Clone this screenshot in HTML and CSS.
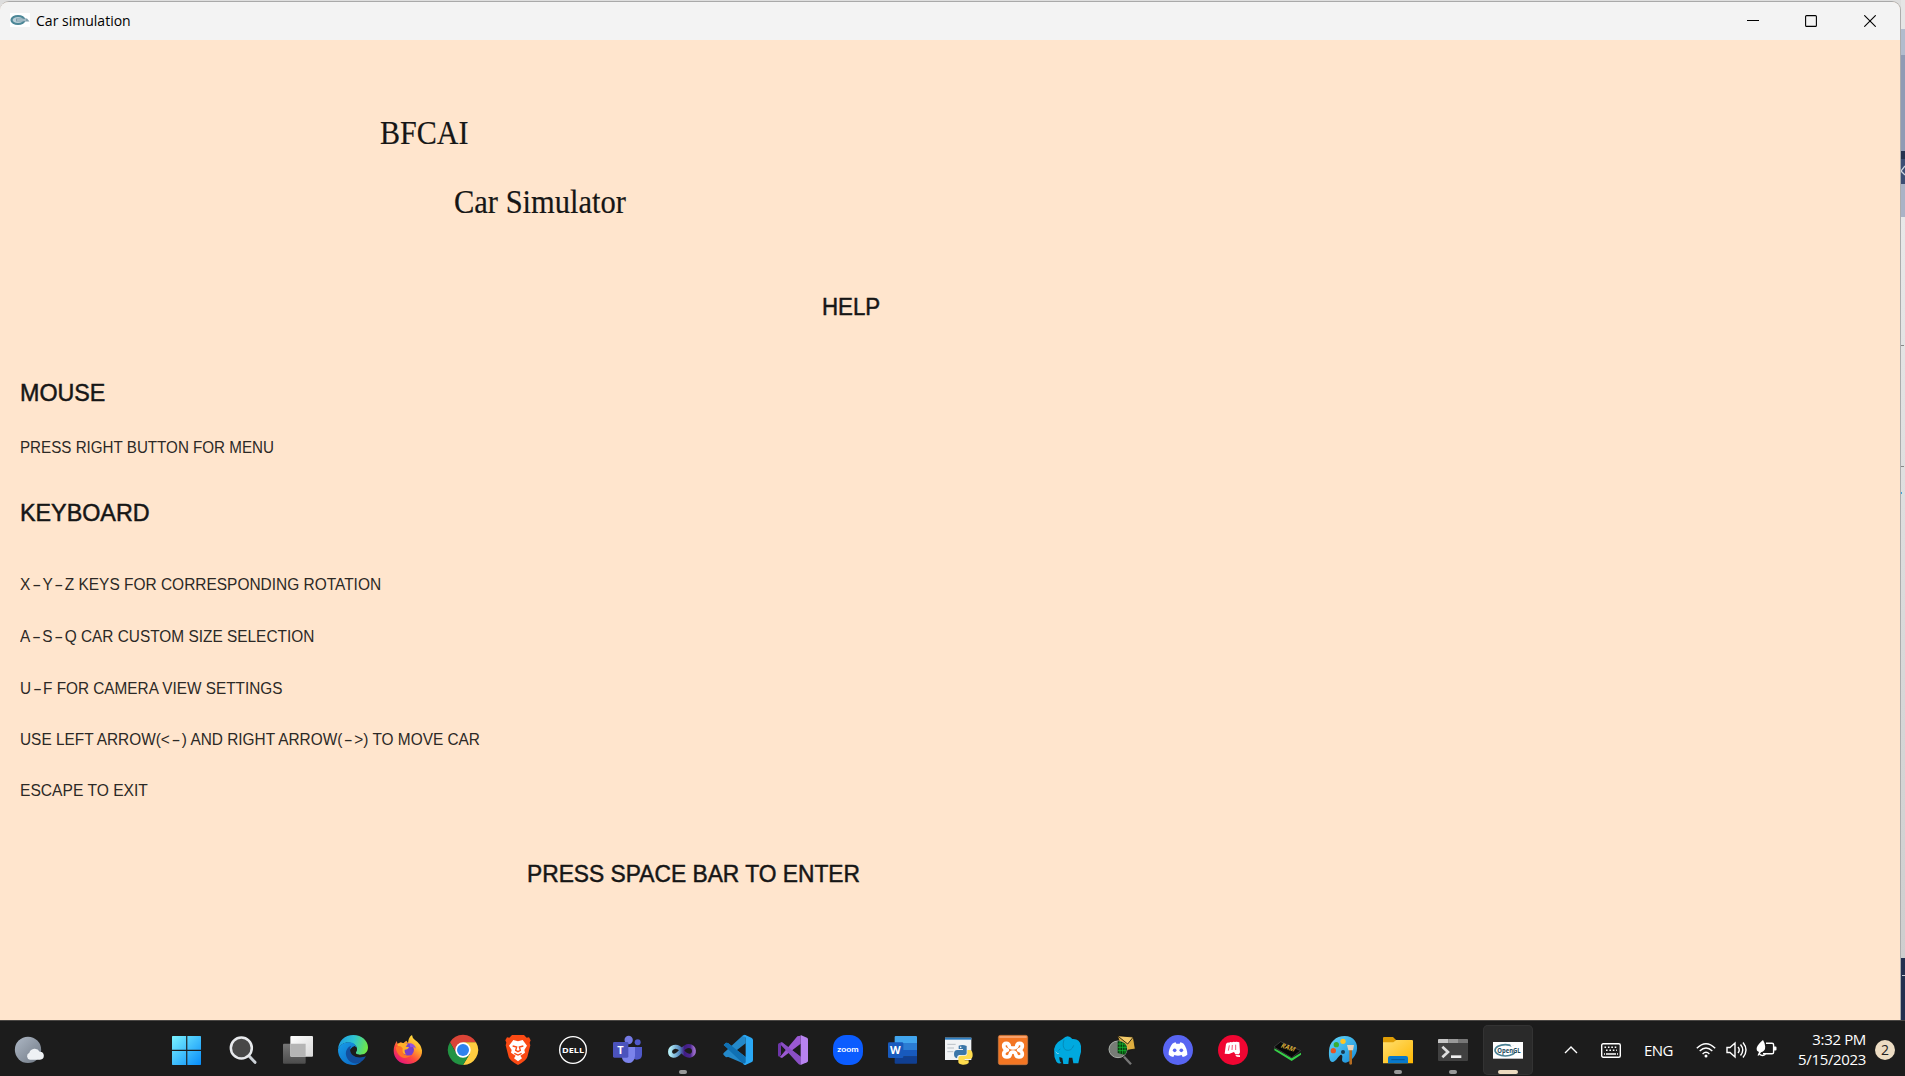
FILE: index.html
```html
<!DOCTYPE html>
<html lang="en">
<head>
<meta charset="utf-8">
<title>Car simulation</title>
<link rel="stylesheet" href="styles.css">
</head>
<body>
<div class="desktop">
  <main class="window">
    <header class="titlebar">
      <svg class="app-icon" viewBox="0 0 20 14"><path fill="#fff" d="M0 0h20v14H0z"/><ellipse cx="8" cy="7" rx="6.500" ry="4" fill="#b9ced6" stroke="#4c8797" stroke-width="2.200"/><path d="M6 5.500h11l2.500 3H6z" fill="#7d9caa"/><path d="M7 7h9" stroke="#c4d6dc"/></svg>
      <h1 class="caption">Car simulation</h1>
      <div class="controls">
        <svg viewBox="0 0 12 12"><path d="M0 5.500h12"/></svg>
        <svg viewBox="0 0 12 12"><rect x=".6" y=".6" width="10.800" height="10.800" rx="1"/></svg>
        <svg viewBox="0 0 12 12"><path d="M.3.3l11.400 11.400M11.700.3L.3 11.700"/></svg>
      </div>
    </header>
    <section class="canvas">
      <p class="line serif bfcai">BFCAI</p>
      <p class="line serif carsim">Car Simulator</p>
      <p class="line head help">HELP</p>
      <p class="line head mouse">MOUSE</p>
      <p class="line item menu">PRESS RIGHT BUTTON FOR MENU</p>
      <p class="line head keyboard">KEYBOARD</p>
      <p class="line item rotation">X<i>-</i>Y<i>-</i>Z KEYS FOR CORRESPONDING ROTATION</p>
      <p class="line item size">A<i>-</i>S<i>-</i>Q CAR CUSTOM SIZE SELECTION</p>
      <p class="line item camera">U<i>-</i>F FOR CAMERA VIEW SETTINGS</p>
      <p class="line item arrows">USE LEFT ARROW(&lt;<i>-</i>) AND RIGHT ARROW(<i>-</i>&gt;) TO MOVE CAR</p>
      <p class="line item escape">ESCAPE TO EXIT</p>
      <p class="line head enter">PRESS SPACE BAR TO ENTER</p>
    </section>
  </main>
  <svg class="behind" viewBox="0 0 4 1020">
    <defs><linearGradient id="bh" x1="0" y1="0" x2="0" y2="1"><stop offset="0" stop-color="#e8e8e8"/><stop offset="1" stop-color="#cecece"/></linearGradient></defs>
    <path fill="#e5e5e5" d="M0 0h4v29H0z"/><path fill="#b2bccd" d="M0 29h4v26H0z"/><path fill="#909bb4" d="M0 55h4v96H0z"/><path fill="#26324f" d="M0 151h4v8H0z"/><path fill="#3d4e74" d="M0 159h4v25H0z"/><path fill="none" stroke="#cdd3df" stroke-width="1.300" d="M4 166L0 171l4 4"/><path fill="#aab3c6" d="M0 184h4v33H0z"/><path fill="url(#bh)" d="M0 217h4v741H0z"/><path fill="#888" d="M0 345h3v1H0zM0 466h3v1H0z"/><path fill="#3fa2dc" d="M0 492h1v2H0z"/><path fill="#23304f" d="M0 958h4v62H0z"/><path fill="#c8ccd4" d="M1 975h3v1H1z"/>
  </svg>
</div>
<footer class="taskbar">
  <svg class="weather" viewBox="0 0 90 90"><defs><linearGradient id="moon" x1="0" y1="0" x2="1" y2="1"><stop stop-color="#aeb8c5"/><stop offset="1" stop-color="#707985"/></linearGradient></defs><circle cx="42" cy="44.500" r="39.500" fill="url(#moon)"/><path d="M48 74a11 11 0 0 1-2-21 17 17 0 0 1 31-3 12 12 0 0 1 1 24z" fill="#eef1f4"/></svg>
  <nav class="apps">
    <span class="app"><svg viewBox="0 0 90 90"><defs><linearGradient id="win" x1="0" y1="0" x2="1" y2="1"><stop stop-color="#7bf3ff"/><stop offset="1" stop-color="#078cf9"/></linearGradient></defs><path fill="url(#win)" d="M-1 3h40.500v41H-3V5q0-2 2-2zM43 3h39q2 0 2 2v39H43zM-3 48h42.500v42H-1q-2 0-2-2zM43 48h41v40q0 2-2 2H43z"/></svg></span>
    <span class="app"><svg viewBox="0 0 90 90"><path d="M61 61l20 21" stroke="#cbd0d6" stroke-width="9" stroke-linecap="round"/><circle cx="40" cy="39" r="31.500" fill="#484848" stroke="#e7e9ec" stroke-width="7.500"/></svg></span>
    <span class="app"><svg viewBox="0 0 90 90"><defs><linearGradient id="tv" x1="0" y1="0" x2="1" y2="1"><stop stop-color="#fff"/><stop offset="1" stop-color="#d8d8d8"/></linearGradient><linearGradient id="tg" x1="0" y1="0" x2="0" y2="1"><stop stop-color="#777"/><stop offset="1" stop-color="#4c4c4c"/></linearGradient></defs><rect y="26" width="68" height="60" rx="3" fill="url(#tg)"/><rect x="22" y="3" width="68" height="62" rx="3" fill="url(#tv)"/><path d="M22 26h46v39H25q-3 0-3-3z" fill="#b5b5b5"/></svg></span>
    <span class="app"><svg viewBox="0 0 90 90"><defs><linearGradient id="e1" x1="0" y1=".3" x2="1" y2=".5"><stop stop-color="#1d9de4"/><stop offset=".5" stop-color="#2fc4d0"/><stop offset="1" stop-color="#6fe944"/></linearGradient><linearGradient id="e2" x1="0" y1="0" x2="1" y2="1"><stop stop-color="#189de8"/><stop offset="1" stop-color="#0a64c2"/></linearGradient></defs><path fill="url(#e1)" d="M0 43C2 17 20 0 46 0c26 0 44 18 44 37 0 16-12 23-24 23-9 0-14-4-12-8 9-14-3-26-17-29C21 20 7 28 0 43z"/><path fill="url(#e2)" d="M0 43c6-15 20-24 36-21 10 1 17 7 20 15-12-4-21 3-22 14-2 20 17 35 35 29-7 7-15 10-24 10C18 90-1 68 0 43z"/><path fill="#124f9e" d="M24 60c-2-13 5-25 16-28-7 10-3 22 5 29 11 8 25 8 39 3-7 12-15 19-25 21-17 3-32-9-35-25z"/><path fill="#1c1c1c" d="M44 36c-4 7-4 17 1 23 10 9 23 9 38 3l2 4c8-12-14-5-22-7-8-1-12-4-9-8 4-8 2-14-4-18z"/></svg></span>
    <span class="app"><svg viewBox="0 0 90 90"><defs><linearGradient id="ff" x1=".9" y1="0" x2=".2" y2="1"><stop stop-color="#fff44f"/><stop offset=".35" stop-color="#ffb02a"/><stop offset=".65" stop-color="#ff4b3d"/><stop offset="1" stop-color="#e00e83"/></linearGradient></defs><path fill="url(#ff)" d="M11 18l3 9 8-5 9 3q4-5 9-8l5 7q1-17 12-24 1 10 9 15 18 12 21 31c2 24-18 41-43 41C20 87 2 70 2 47c0-11 4-20 9-29z"/><circle cx="44" cy="44" r="19" fill="#7540ce"/><path fill="#ffb12a" d="M13 26l12-3 20 3-7 9 10 1q-3 8-13 8-1 11 6 15-20-3-25-20z"/><path fill="#ff7328" d="M8 37q12-9 21 3c-3 18 8 24 25 21-19 17-42 5-46-24z"/><path fill="#9352e3" d="M49 24q17 2 20 17-6-8-17-4z"/></svg></span>
    <span class="app"><svg viewBox="0 0 90 90"><path fill="#db4437" d="M6 22A45 45 0 0 1 84 22H45L26 56z"/><path fill="#ffcd40" d="M84 22A45 45 0 0 1 45 90l20-33-20-35z"/><path fill="#229342" d="M6 22a45 45 0 0 0 39 68l20-33H26z"/><circle cx="45" cy="45" r="23" fill="#fff"/><circle cx="45" cy="45" r="18" fill="#2d82ee"/></svg></span>
    <span class="app"><svg viewBox="0 0 90 90"><path fill="#fb4a14" d="M27 0h36l8 8 7-1 5 9-3 7 2 8-9 35q-3 11-28 24-25-13-28-24L8 31l2-8-3-7 5-9 7 1z"/><path fill="#fff" d="M31 15l14 4 14-4 13 17-8 13 2 8-14 9 5 8-12 9-12-9 5-8-14-9 2-8-8-13z"/><path fill="none" stroke="#fb4a14" stroke-width="4" d="M29 33l12 3-3 10 7 4 7-4-3-10 12-3M34 55l11 5 11-5"/></svg></span>
    <span class="app"><svg viewBox="0 0 90 90"><circle cx="45" cy="45" r="40" fill="#1c1c1c" stroke="#fff" stroke-width="4"/><text class="glyph dell" x="12" y="53" textLength="66" lengthAdjust="spacingAndGlyphs">DELL</text></svg></span>
    <span class="app"><svg viewBox="0 0 90 90"><circle cx="47" cy="15" r="12.500" fill="#7479e3"/><circle cx="74" cy="22" r="9" fill="#5059c9"/><path fill="#5059c9" d="M57 36h30v24q-1 14-16 14-9 0-14-8z"/><path fill="#7b83eb" d="M26 36h40v26q-2 22-20 22-18 0-20-20z"/><rect y="21" width="46" height="47" rx="4" fill="#4b53bc"/><text class="glyph letter" x="22" y="57" text-anchor="middle">T</text></svg></span>
    <span class="app running"><svg viewBox="0 0 90 90"><defs><linearGradient id="inf"><stop stop-color="#b4edf6"/><stop offset=".4" stop-color="#5589bf"/><stop offset=".6" stop-color="#411c83"/><stop offset=".85" stop-color="#4c2590"/><stop offset="1" stop-color="#976ac6"/></linearGradient></defs><path fill="none" stroke="url(#inf)" stroke-width="12" d="M42 47C34 36 27 34 18 36 2 41 3 60 16 62c18 3 26-29 46-29 20 0 21 27 4 29-9 1-17-4-24-15z"/></svg></span>
    <span class="app"><svg viewBox="0 0 90 90"><path fill="#2489ca" d="M2 30l7-7 6 1 53 42v21q-4 2-8-2L2 60q-3-3 0-6l58-53q4-3 8 0v24L15 66l-6 1-7-7 20-15z"/><path fill="#1070b3" d="M2 30l7-7 6 1 53 42v24q-5-1-9-5z"/><path fill="#2aa8f5" d="M67 0l18 8q5 2 5 7v60q0 5-5 7l-18 8q-4 1-8-5 9 3 9-5V10q0-8-9-5 4-6 8-5z"/></svg></span>
    <span class="app"><svg viewBox="0 0 90 90"><path fill="#6d35a8" d="M0 29q0-3 3-4l8-4 57 44v23L9 31v29l-6 5q-3-1-3-4z"/><path fill="#9b59d3" d="M68 2v24L12 69l-9-4q4 0 6-3L58 4z"/><path fill="#8a4fc4" d="M11 21l57 44v25q-6-2-10-7L9 29z"/><path fill="#b883f0" d="M68 0l19 8q3 2 3 5v64q0 3-3 5l-19 8z"/></svg></span>
    <span class="app"><svg viewBox="0 0 90 90"><rect width="90" height="90" rx="39" fill="#0b5cff"/><text class="glyph zoom" x="13" y="51" textLength="64" lengthAdjust="spacingAndGlyphs">zoom</text></svg></span>
    <span class="app"><svg viewBox="0 0 90 90"><path fill="#41a5ee" d="M23 3h61q3 0 3 3v18H20V6q0-3 3-3z"/><path fill="#2b7cd3" d="M20 24h67v21H20z"/><path fill="#185abd" d="M20 45h67v20H20z"/><path fill="#103f91" d="M20 65h67v18q0 3-3 3H23q-3 0-3-3z"/><rect y="22" width="46" height="47" rx="4" fill="#185abd"/><text class="glyph letter" x="22" y="56" text-anchor="middle">W</text></svg></span>
    <span class="app"><svg viewBox="0 0 90 90"><path fill="#f1f3f5" d="M6 8h79v67H6z"/><path fill="#2a7cc0" d="M6 8h79v6H6z"/><path stroke="#b8c0c6" stroke-width="3" d="M13 28h25M13 39h20M13 50h18"/><path fill="#3b76a8" d="M47 32q12-5 24 1v22q0 5-6 5H48q-6 1-6 10-9-2-9-13 0-12 10-12h17v-3H47z"/><path fill="#ffdc4d" d="M73 45h9q7 3 7 15 0 12-9 12H65v4h12v8q-6 6-18 5-13-1-13-8V70q0-8 8-8h15q4-1 4-7z"/><circle cx="53" cy="37" r="2.500" fill="#fff"/></svg></span>
    <span class="app"><svg viewBox="0 0 90 90"><rect x="1" y="1" width="88" height="88" rx="6" fill="#f37623" stroke="#c77c48" stroke-width="2"/><path fill="#f8a06a" d="M4 3h82v6H4z"/><path fill="none" stroke="#fff" stroke-width="11" stroke-linecap="round" stroke-linejoin="round" d="M34 34q-1-9-9-9-8 0-8 8 0 8 11 12-11 4-11 12 0 9 10 9 9 0 10-9 1-6 8-6 7 0 8 6 1 9 10 9 10 0 10-9 0-8-11-12 11-4 11-12 0-8-8-8-8 0-9 9"/><path stroke="#fff" stroke-width="10" stroke-linecap="round" fill="none" d="M34 34q2 5 11 5t11-5"/></svg></span>
    <span class="app"><svg viewBox="0 0 90 90"><path fill="#00a9df" d="M29 12Q45-5 58 12q22-2 26 21 2 19-4 33l-4 19H61l-3-17H48l-2 19H31l-3-18-9-3q0 16 7 18-14 5-18-9Q3 68 4 57q-7-29 25-45z"/><path fill="none" stroke="#087ba7" stroke-width="2" d="M33 14q-7 22 5 31 18 5 24-14M22 42q-5 2-6 5"/><path fill="#fff" d="M7 48q5 9 12 8-8 4-12-8z"/></svg></span>
    <span class="app"><svg viewBox="0 0 90 90"><path fill="#dfae3f" stroke="#111" stroke-width="2.500" d="M28 2l48 4 6 36-38 6z"/><path fill="#f4cb69" stroke="#111" stroke-width="2.500" d="M28 2l48 4-17 21z"/><path stroke="#777" stroke-width="7" d="M48 65l21 23"/><ellipse cx="30" cy="43" rx="27" ry="25" fill="#777c76" stroke="#abb0aa" stroke-width="3"/><path fill="#063d0b" d="M29 18q28 2 28 24 0 12-8 17l-20-5z"/><path stroke="#18cb38" stroke-width="2" d="M29 27h23M29 37h28M29 47h27M36 18v38M44 22v35M51 27v29"/></svg></span>
    <span class="app"><svg viewBox="0 0 90 90"><circle cx="45" cy="45" r="45" fill="#5865f2"/><path fill="#fff" d="M28 26q5-3 10-4l2 4h10l2-4q5 1 10 4 11 15 11 33-6 5-14 7l-3-6q-11 4-22 0l-3 6q-8-2-14-7-1-17 11-33z"/><circle cx="35" cy="46" r="5.500" fill="#5865f2"/><circle cx="55" cy="46" r="5.500" fill="#5865f2"/></svg></span>
    <span class="app"><svg viewBox="0 0 90 90"><circle cx="45" cy="45" r="45" fill="#f00632"/><path fill="#fff" d="M24 27q4-5 9-4 4-4 9-1 4-3 9-1 6-2 13 1l2 30-3 6H52l-4-7-15 6-13-1z"/><path stroke="#f00632" stroke-width="2" fill="none" d="M34 31l-3 16M43 30l-1 15M53 29v16"/><path fill="#fff" d="M52 60l14 1v5l-10-1z"/></svg></span>
    <span class="app"><svg viewBox="0 0 90 90"><path fill="#36d048" d="M4 40l52 30 28-17v6L56 78 4 46z"/><path fill="#080808" stroke="#4a4a4a" stroke-width="2" d="M3 36l20-16 60 27-27 21z"/><text class="glyph ram" transform="translate(22 37) rotate(18) skewX(-14)" textLength="42" lengthAdjust="spacingAndGlyphs">RAM</text></svg></span>
    <span class="app"><svg viewBox="0 0 90 90"><defs><linearGradient id="pal" x1="0" y1="0" x2="1" y2="1"><stop stop-color="#64d8fa"/><stop offset="1" stop-color="#168bd8"/></linearGradient></defs><path fill="url(#pal)" d="M3 48C4 21 24 3 50 3c28 0 42 22 36 46-7 25-30 38-39 33-10-5 0-18-6-22-7-5-16 23-29 21-8-2-10-18-9-33z"/><circle cx="45" cy="19" r="8" fill="#ffc524"/><circle cx="25" cy="29" r="8" fill="#38ad32"/><circle cx="16" cy="47" r="8" fill="#e65424"/><circle cx="45" cy="51" r="6" fill="#173a52"/><path fill="#b36c22" d="M64 44h8v43q-4 5-8 0z"/><path fill="#e7d4bd" d="M57 30h21l-3 16H61z"/></svg></span>
    <span class="app running"><svg viewBox="0 0 90 90"><defs><linearGradient id="fol" x1="0" y1="0" x2="1" y2="1"><stop stop-color="#ffdf70"/><stop offset="1" stop-color="#ffb700"/></linearGradient></defs><path fill="#df9d05" d="M0 9q0-3 3-3h27l10 10v12H0z"/><path fill="url(#fol)" d="M0 22h31l9-7h47q3 0 3 3v67H0z"/><path fill="#0879cb" d="M15 85V69q0-6 6-6h48q6 0 6 6v16z"/><path stroke="#075796" stroke-width="3" d="M25 74h40"/></svg></span>
    <span class="app running"><svg viewBox="0 0 90 90"><rect y="12" width="90" height="66" rx="3" fill="#414141"/><path fill="#c5c5c5" d="M3 12h28v12H0v-9q0-3 3-3z"/><path fill="#999" d="M31 12h29v12H31z"/><path fill="#777" d="M60 12h27q3 0 3 3v9H60z"/><path fill="none" stroke="#ddd" stroke-width="8" d="M13 35l17 16-17 16"/><path stroke="#eee" stroke-width="8" d="M39 65h31"/></svg></span>
    <span class="app active"><svg viewBox="0 0 90 90"><path fill="#fff" d="M0 21h90v50H0z"/><ellipse cx="37" cy="46" rx="31" ry="17" fill="none" stroke="#4b8194" stroke-width="5"/><path fill="#fff" d="M51 28l25 8-9 20z"/><text class="glyph gl" x="13" y="54" textLength="70" lengthAdjust="spacingAndGlyphs">OpenGL</text></svg></span>
  </nav>
  <div class="tray">
    <svg class="chevron" viewBox="0 0 14 8"><path d="M1 7l6-6 6 6"/></svg>
    <svg class="keys" viewBox="0 0 20 15"><rect x=".7" y=".7" width="18.600" height="13.600" rx="1.500"/><path stroke-dasharray="1.600 1.800" d="M3.500 4.300h13.500M5 7.300h11"/><path d="M5 11h10M3 11h1M16 11h1"/></svg>
    <span class="lang">ENG</span>
    <svg class="wifi" viewBox="0 0 20 16"><path d="M.8 6.200q9.200-9 18.400 0M3.700 9q6.300-6 12.600 0M6.600 11.900q3.400-3.200 6.800 0"/><circle cx="10" cy="14" r="1.500"/></svg>
    <svg class="sound" viewBox="0 0 21 18"><path d="M1 6.500h3l5-4.500v14l-5-4.500H1zM12 6q2.500 3 0 6M14.500 3.500q4.500 5.500 0 11M17 1.500q6 7.500 0 15"/></svg>
    <svg class="battery" viewBox="0 0 21 17"><path d="M10 3.200h6q1.600 0 1.600 1.600v7.400q0 1.600-1.600 1.600H7"/><path class="solid" d="M18 6.500h1.500q1 0 1 1v2q0 1-1 1H18zM7 0q2 3 2.200 6.500Q9.500 11 5 12.200l-2 3.300H1.500L3 12Q0 11 .8 7.500 2 4 7 0z"/><path d="M3.500 14.200q3 2.500 6 0"/></svg>
    <time class="clock"><span>3:32 PM</span><span>5/15/2023</span></time>
    <span class="badge">2</span>
  </div>
</footer>
</body>
</html>
```
FILE: styles.css
```css
* { box-sizing: border-box; }

body {
  margin: 0;
  width: 1905px;
  height: 1076px;
  overflow: hidden;
  display: grid;
  grid-template-rows: 1020px 56px;
  font-family: "Open Sans", "Noto Sans", sans-serif;
}

.desktop { display: flex; background: #dedede; }

.window {
  width: 1901px;
  height: 1019px;
  margin-top: 1px;
  border-top: 1px solid #a9a9a9;
  border-right: 1px solid #acacac;
  border-radius: 9px 9px 0 0;
  overflow: hidden;
  background: #ffe5cd;
}

.behind { width: 4px; height: 1020px; }

.titlebar {
  height: 38px;
  display: flex;
  align-items: center;
  padding: 0 24px 0 10px;
  background: #f3f3f3;
}
.app-icon { width: 20px; height: 14px; margin-top: -3px; }
.caption {
  margin: -2px 0 0 6px;
  font-size: 15px;
  font-weight: 400;
  line-height: 20px;
  color: #000;
  transform: scaleX(.935);
  transform-origin: left;
}
.controls { display: flex; gap: 47px; margin-left: auto; }
.controls svg { width: 12px; height: 12px; fill: none; stroke: #000; stroke-width: 1.1; }
.controls svg:first-child { margin-right: -1px; }

.canvas { display: flow-root; color: #161616; }
.line {
  width: max-content;
  margin: 0;
  white-space: nowrap;
  font-kerning: none;
  transform-origin: left;
}
.serif { font: 33px/40px "Liberation Serif", serif; -webkit-text-stroke: .2px #161616; }
.head { font: 24.5px/30px "Liberation Sans", sans-serif; -webkit-text-stroke: .5px #161616; }
.item { font: 16px/20px "Liberation Sans", sans-serif; color: #2c2926; margin-left: 19.5px; }
.item i {
  display: inline-block;
  width: 12.5px;
  text-align: center;
  font-style: normal;
  transform: scaleX(1.75);
}

.bfcai { margin: 73px 0 0 380px; transform: scaleX(.91); }
.carsim { margin: 29px 0 0 453.5px; transform: scaleX(.924); }
.help { margin: 70px 0 0 821.5px; transform: scaleX(.91); }
.mouse { margin: 56px 0 0 19.5px; transform: scaleX(.95); }
.menu { margin-top: 30px; transform: scaleX(.948); }
.keyboard { margin: 40px 0 0 19.5px; transform: scaleX(.952); }
.rotation { margin-top: 47px; transform: scaleX(.966); }
.size { margin-top: 32px; transform: scaleX(.963); }
.camera { margin-top: 32px; transform: scaleX(.958); }
.arrows { margin-top: 31px; transform: scaleX(.962); }
.escape { margin-top: 31px; transform: scaleX(.976); }
.enter { margin: 58px 0 0 526.5px; transform: scaleX(.93); }

.taskbar {
  display: flex;
  align-items: flex-start;
  background: #1c1c1c;
  border-top: 1px solid #4a4744;
  color: #fff;
}
.weather { width: 30px; height: 30px; margin: 14px 0 0 14px; }

.apps { display: flex; margin-left: 116.5px; }
.app {
  width: 55px;
  height: 55px;
  display: flex;
  flex-direction: column;
  align-items: center;
  padding-top: 14px;
}
.app svg { width: 30px; height: 30px; flex: none; overflow: visible; }
.running::after, .active::after {
  content: "";
  width: 8px;
  height: 4px;
  margin-top: 5px;
  border-radius: 2px;
  background: #999;
}
.active {
  width: 50px;
  height: 50px;
  margin: 4px 2.5px 0;
  padding-top: 10px;
  border-radius: 5px;
  background: #2a2a2a;
  box-shadow: inset 0 0 0 1px #333;
}
.active::after { width: 20px; background: #ecdbc0; }

.glyph { fill: #fff; font-family: "Open Sans", sans-serif; font-weight: 700; }
.dell { font-size: 23px; }
.letter { font-size: 33px; }
.zoom { font-size: 24px; font-family: Lato, sans-serif; }
.ram { font-size: 20px; fill: #d7ad3a; }
.gl { font-size: 21px; fill: #244a5b; }

.tray { display: flex; align-items: center; height: 58px; margin-left: 28.5px; flex: none; }
.tray svg { flex: none; fill: none; stroke: #fff; stroke-width: 1.4; }
.chevron { width: 14px; height: 8px; stroke-width: 2; }
.keys { width: 20px; height: 15px; margin-left: 23px; }
.lang { width: 31px; margin-left: 23px; font-size: 15px; line-height: 20px; letter-spacing: -.6px; }
.wifi { width: 20px; height: 16px; margin-left: 21px; }
.wifi circle { fill: #fff; stroke: none; }
.sound { width: 21px; height: 18px; margin-left: 10px; }
.battery { width: 21px; height: 17px; margin-left: 9px; margin-top: -3px; }
.battery .solid { fill: #fff; stroke: none; }
.clock {
  display: grid;
  width: 80px;
  margin: -2px 0 0 9px;
  text-align: right;
  font-size: 15px;
  line-height: 20px;
  letter-spacing: -.35px;
}
.badge {
  width: 20px;
  height: 20px;
  margin-left: 9px;
  border-radius: 50%;
  background: #ecdcc3;
  color: #222;
  font-size: 14px;
  line-height: 20px;
  text-align: center;
}
```
